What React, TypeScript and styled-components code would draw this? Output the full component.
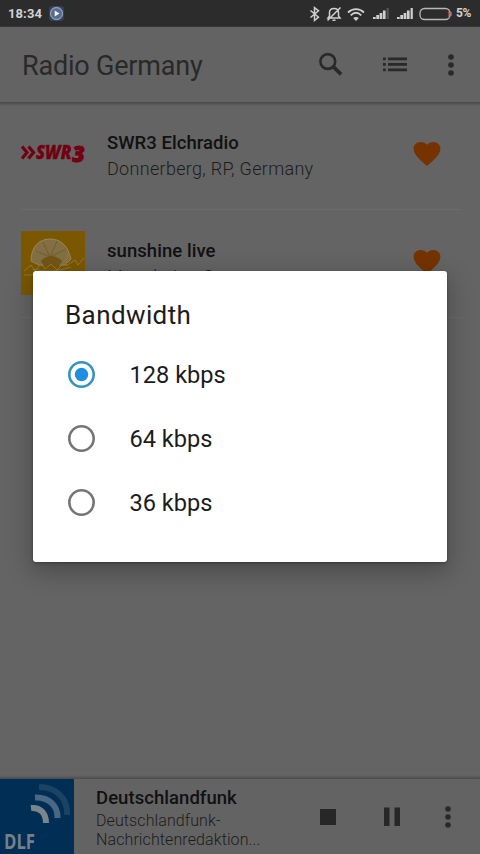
import React from "react";
import styled, { createGlobalStyle } from "styled-components";

const Global = createGlobalStyle`
  *, *::before, *::after { box-sizing: border-box; }
  html, body { margin: 0; padding: 0; background: #646464; }
  body { font-family: Roboto, "Liberation Sans", sans-serif; overflow: hidden; }
  svg { display: block; flex: none; }
`;

const Screen = styled.div`
  position: relative;
  width: 480px;
  height: 854px;
  display: flex;
  flex-direction: column;
  background: #646464;
  overflow: hidden;
`;

const StatusBar = styled.header`
  height: 27px;
  flex: none;
  display: flex;
  align-items: center;
  justify-content: space-between;
  padding: 0 9px 0 8px;
  background: #2c2c2c;
  color: #d2d2d2;
`;

const StatusGroup = styled.div<{ $gap: number }>`
  display: flex;
  align-items: center;
  gap: ${(p) => p.$gap}px;
`;

const Clock = styled.span`
  font-size: 13px;
  font-weight: 700;
  line-height: 27px;
  letter-spacing: 0.1px;
`;

const BatteryText = styled.span`
  font-size: 12px;
  font-weight: 700;
  line-height: 27px;
  letter-spacing: -0.4px;
`;

const Toolbar = styled.div`
  height: 75px;
  flex: none;
  display: flex;
  align-items: center;
  padding: 0 25.5px 0 22px;
  background: #636363;
  box-shadow: 0 1px 2px 1px #4a4a4a;
  color: #292929;
  z-index: 1;
`;

const Title = styled.h1`
  margin: 2px 0 0;
  flex: 1;
  font-size: 27px;
  font-weight: 400;
  line-height: 34px;
  letter-spacing: -0.2px;
`;

const ToolbarIcons = styled.div`
  display: flex;
  align-items: center;
`;

const List = styled.main`
  flex: 1;
  padding: 0 18px 0 21px;
`;

const Station = styled.section`
  height: 108px;
  display: flex;
  padding-right: 21px;
  border-bottom: 1px solid #6b6b6b;
`;

const Artwork = styled.div`
  width: 65px;
  padding-top: 21px;
  flex: none;
`;

const StationInfo = styled.div`
  flex: 1;
  padding: 28px 0 0 21px;
`;

const StationName = styled.div`
  font-size: 18.5px;
  font-weight: 500;
  line-height: 26px;
  letter-spacing: 0.05px;
  color: #111;
`;

const StationPlace = styled.div`
  font-size: 18px;
  font-weight: 300;
  line-height: 26px;
  letter-spacing: 0.31px;
  color: #1c1c1c;
`;

const Favourite = styled.div`
  padding-top: 38px;
`;

const Player = styled.footer`
  height: 75px;
  flex: none;
  display: flex;
  background: #636363;
  box-shadow: 0 -1px 2px 1px #4e4e4e;
`;

const PlayerText = styled.div`
  flex: 1;
  padding: 6px 0 0 22px;
`;

const PlayerName = styled.div`
  font-size: 18.5px;
  font-weight: 500;
  line-height: 26px;
  letter-spacing: 0.05px;
  color: #111;
`;

const PlayerLine = styled.div`
  font-size: 16px;
  font-weight: 300;
  line-height: 19px;
  letter-spacing: 0.1px;
  color: #1c1c1c;
`;

const Controls = styled.div`
  display: flex;
  align-items: center;
  padding-right: 23px;
`;

const Dialog = styled.div`
  position: absolute;
  left: 33px;
  top: 271px;
  width: 414px;
  height: 291px;
  padding: 27px 32px;
  border-radius: 3px;
  background: #fff;
  box-shadow: 0 8px 24px 2px rgba(0, 0, 0, 0.26), 0 1px 3px rgba(0, 0, 0, 0.3);
  z-index: 2;
`;

const DialogTitle = styled.h2`
  margin: 0 0 11px;
  font-size: 26px;
  font-weight: 400;
  line-height: 34px;
  letter-spacing: 0.4px;
  color: #1c1c1c;
`;

const Option = styled.label`
  height: 64px;
  display: flex;
  align-items: center;
  gap: 35px;
  font-size: 23.6px;
  line-height: 32px;
  color: #1c1c1c;
`;

const RadioMark = styled.svg`
  margin: 0 0 2px 2.5px;
`;

const Radio = ({ on }: { on: boolean }) => (
  <RadioMark width="27" height="27" viewBox="0 0 27 27">
    <circle cx="13.5" cy="13.5" r="12.2" fill="none" stroke={on ? "#3593bd" : "#757575"} strokeWidth="2.6" />
    {on && <circle cx="13.5" cy="13.5" r="6.7" fill="#1e8fe0" />}
  </RadioMark>
);

const Dots = ({ w = 8 }: { w?: number }) => (
  <svg width={w} height="26" viewBox="0 0 8 26" fill="#292929">
    <circle cx="4" cy="5" r="2.8" />
    <circle cx="4" cy="13" r="2.8" />
    <circle cx="4" cy="21" r="2.8" />
  </svg>
);

const Heart = () => (
  <svg width="28" height="28" viewBox="0 0 28 28">
    <path
      fill="#753300"
      d="M14 26 C9 21 0.6 15.5 0.6 8.7 C0.6 4.8 4 2 7.5 2 C10.2 2 12.7 3.3 14 4.8 C15.3 3.3 17.8 2 20.5 2 C24 2 27.4 4.8 27.4 8.7 C27.4 15.5 19 21 14 26Z"
    />
  </svg>
);

const Signal = ({ last = "#cfcfcf" }: { last?: string }) => (
  <svg width="17" height="13" viewBox="0 0 17 13" fill="#cfcfcf">
    <rect x="0" y="10" width="2.7" height="2" />
    <rect x="3.3" y="8" width="2.7" height="4" />
    <rect x="6.6" y="6" width="2.7" height="6" />
    <rect x="9.9" y="3.5" width="2.7" height="8.5" />
    <rect x="13.6" y="1" width="2.2" height="11" fill={last} />
  </svg>
);

const SwrLogo = () => (
  <svg width="65" height="64" viewBox="0 0 65 64">
    <g stroke="#720012" strokeWidth="3.2" fill="none">
      <path d="M1 23.5 L6 29.5 L1 35.5" />
      <path d="M7.5 23.5 L12.5 29.5 L7.5 35.5" />
    </g>
    <g
      fill="#720012"
      stroke="#720012"
      fontFamily="Open Sans, sans-serif"
      fontWeight="800"
      fontStyle="italic"
    >
      <text x="15" y="36" fontSize="18.5" strokeWidth="0.3" textLength="35.5" lengthAdjust="spacingAndGlyphs">
        SWR
      </text>
      <text x="51.2" y="38.5" fontSize="23" strokeWidth="0.9" textLength="12.5" lengthAdjust="spacingAndGlyphs">
        3
      </text>
    </g>
  </svg>
);

const SunshineLogo = () => (
  <svg width="64" height="64" viewBox="0 0 64 64">
    <rect width="64" height="64" fill="#7b5800" />
    <path d="M10 30 C10 16 18 8 29 8 C41 8 47 16 50 28 L44 34 H18Z" fill="#827044" stroke="#98875a" strokeWidth="1" />
    <path d="M29 26 L15 20 M29 26 L22 11 M29 26 L36 10 M29 26 L45 18" stroke="#76622f" strokeWidth="1.2" />
    <path d="M20 30 Q30 20 41 30 L38 35 H23Z" fill="#735515" />
    <g fill="none" stroke="#917740" strokeWidth="1">
      <path d="M3 40 L10 34 L14 40 L20 33 L24 38 L30 33 L36 39 L43 32 L47 23 L45 35 L54 29 L57 34 L63 27" />
      <path d="M3 44 H48 M12 38 Q30 43 50 36" />
    </g>
  </svg>
);

const DlfLogo = () => (
  <svg width="74" height="75" viewBox="0 0 74 75">
    <rect width="74" height="75" fill="#002e55" />
    <g fill="none" strokeWidth="6">
      <path d="M31 29 C40 28 46 34 46 44" stroke="#7a858e" />
      <path d="M35 18.5 C49 18 58 27 57.5 39" stroke="#486883" />
      <path d="M39 8 C57 8 68 20 67 36" stroke="#1c4364" />
    </g>
    <text
      x="4"
      y="69.5"
      fill="#75808a"
      fontFamily="Open Sans, sans-serif"
      fontSize="21"
      fontWeight="700"
      textLength="31"
      lengthAdjust="spacingAndGlyphs"
    >
      DLF
    </text>
  </svg>
);

const stations = [
  { name: "SWR3 Elchradio", place: "Donnerberg, RP, Germany", logo: <SwrLogo /> },
  { name: "sunshine live", place: "Mannheim, Germany", logo: <SunshineLogo /> },
];

const rates = ["128 kbps", "64 kbps", "36 kbps"];

const StatusIcons = () => (
  <svg width="57" height="18" viewBox="0 0 57 18" fill="none" stroke="#cfcfcf" strokeWidth="1.5">
    <path d="M1.5 5.5 L9.5 12.2 L5.5 15.5 V2.5 L9.5 5.8 L1.5 12.5" />
    <path d="M19 13 H31 L29.5 11 V7.5 C29.5 4.8 27.8 3.5 25 3.5 C22.2 3.5 20.5 4.8 20.5 7.5 V11 Z M23.5 15.2 H26.5 M31.5 2.5 L18.5 15.5" />
    <path d="M39 7.5 C43.5 3 50.5 3 55 7.5" strokeWidth="1.8" />
    <path d="M41.7 10.3 C45 7.2 49 7.2 52.3 10.3" strokeWidth="1.8" />
    <path d="M44.2 13 C46 11.5 48 11.5 49.8 13 L47 16Z" fill="#cfcfcf" stroke="none" />
  </svg>
);

export default function App() {
  return (
    <>
      <Global />
      <Screen>
        <StatusBar>
          <StatusGroup $gap={7}>
            <Clock>18:34</Clock>
            <svg width="15" height="15" viewBox="0 0 15 15">
              <rect width="15" height="15" rx="3" fill="#31405e" />
              <circle cx="7.5" cy="7.5" r="6" fill="#56698f" stroke="#8d9ab0" strokeWidth="1.3" />
              <path d="M5.7 4.5 L10.5 7.5 L5.7 10.5Z" fill="#f0f2f5" />
            </svg>
          </StatusGroup>
          <StatusGroup $gap={5}>
            <StatusGroup $gap={7}>
              <StatusIcons />
              <Signal last="#555" />
              <Signal />
            </StatusGroup>
            <StatusGroup $gap={4}>
              <svg width="33" height="14" viewBox="0 0 33 14" fill="none">
                <rect x="1" y="1.5" width="30" height="11" rx="4.5" stroke="#b8b8b8" strokeWidth="1.3" />
                <path d="M29.5 3.5 V10.5" stroke="#8b4545" strokeWidth="1.2" />
                <path d="M32 5 V9" stroke="#b08080" strokeWidth="1.3" />
              </svg>
              <BatteryText>5%</BatteryText>
            </StatusGroup>
          </StatusGroup>
        </StatusBar>

        <Toolbar>
          <Title>Radio Germany</Title>
          <ToolbarIcons>
            <svg width="64" height="28" viewBox="0 0 64 28" fill="none" stroke="#292929">
              <circle cx="8.8" cy="10.5" r="7.4" strokeWidth="2.6" />
              <path d="M14.1 15.6 L22.1 23.4" strokeWidth="3.6" />
            </svg>
            <svg width="64" height="28" viewBox="0 0 64 28" fill="#292929">
              <path d="M0 6.5h2.8v2.8H0zM5 6.5h19v2.8H5zM0 12h2.8v2.8H0zM5 12h19v2.8H5zM0 17.5h2.8v2.8H0zM5 17.5h19v2.8H5z" />
            </svg>
            <Dots />
          </ToolbarIcons>
        </Toolbar>

        <List>
          {stations.map((s) => (
            <Station key={s.name}>
              <Artwork>{s.logo}</Artwork>
              <StationInfo>
                <StationName>{s.name}</StationName>
                <StationPlace>{s.place}</StationPlace>
              </StationInfo>
              <Favourite>
                <Heart />
              </Favourite>
            </Station>
          ))}
        </List>

        <Player>
          <DlfLogo />
          <PlayerText>
            <PlayerName>Deutschlandfunk</PlayerName>
            <PlayerLine>Deutschlandfunk-</PlayerLine>
            <PlayerLine>Nachrichtenredaktion...</PlayerLine>
          </PlayerText>
          <Controls>
            <svg width="64" height="26" viewBox="0 0 64 26" fill="#272727">
              <rect x="0" y="5" width="16" height="16" />
            </svg>
            <svg width="55" height="26" viewBox="0 0 55 26" fill="#272727">
              <rect x="0" y="3.5" width="5.5" height="18.5" />
              <rect x="10.5" y="3.5" width="5.5" height="18.5" />
            </svg>
            <Dots w={18} />
          </Controls>
        </Player>

        <Dialog role="dialog">
          <DialogTitle>Bandwidth</DialogTitle>
          {rates.map((r, i) => (
            <Option key={r}>
              <Radio on={i === 0} />
              {r}
            </Option>
          ))}
        </Dialog>
      </Screen>
    </>
  );
}
